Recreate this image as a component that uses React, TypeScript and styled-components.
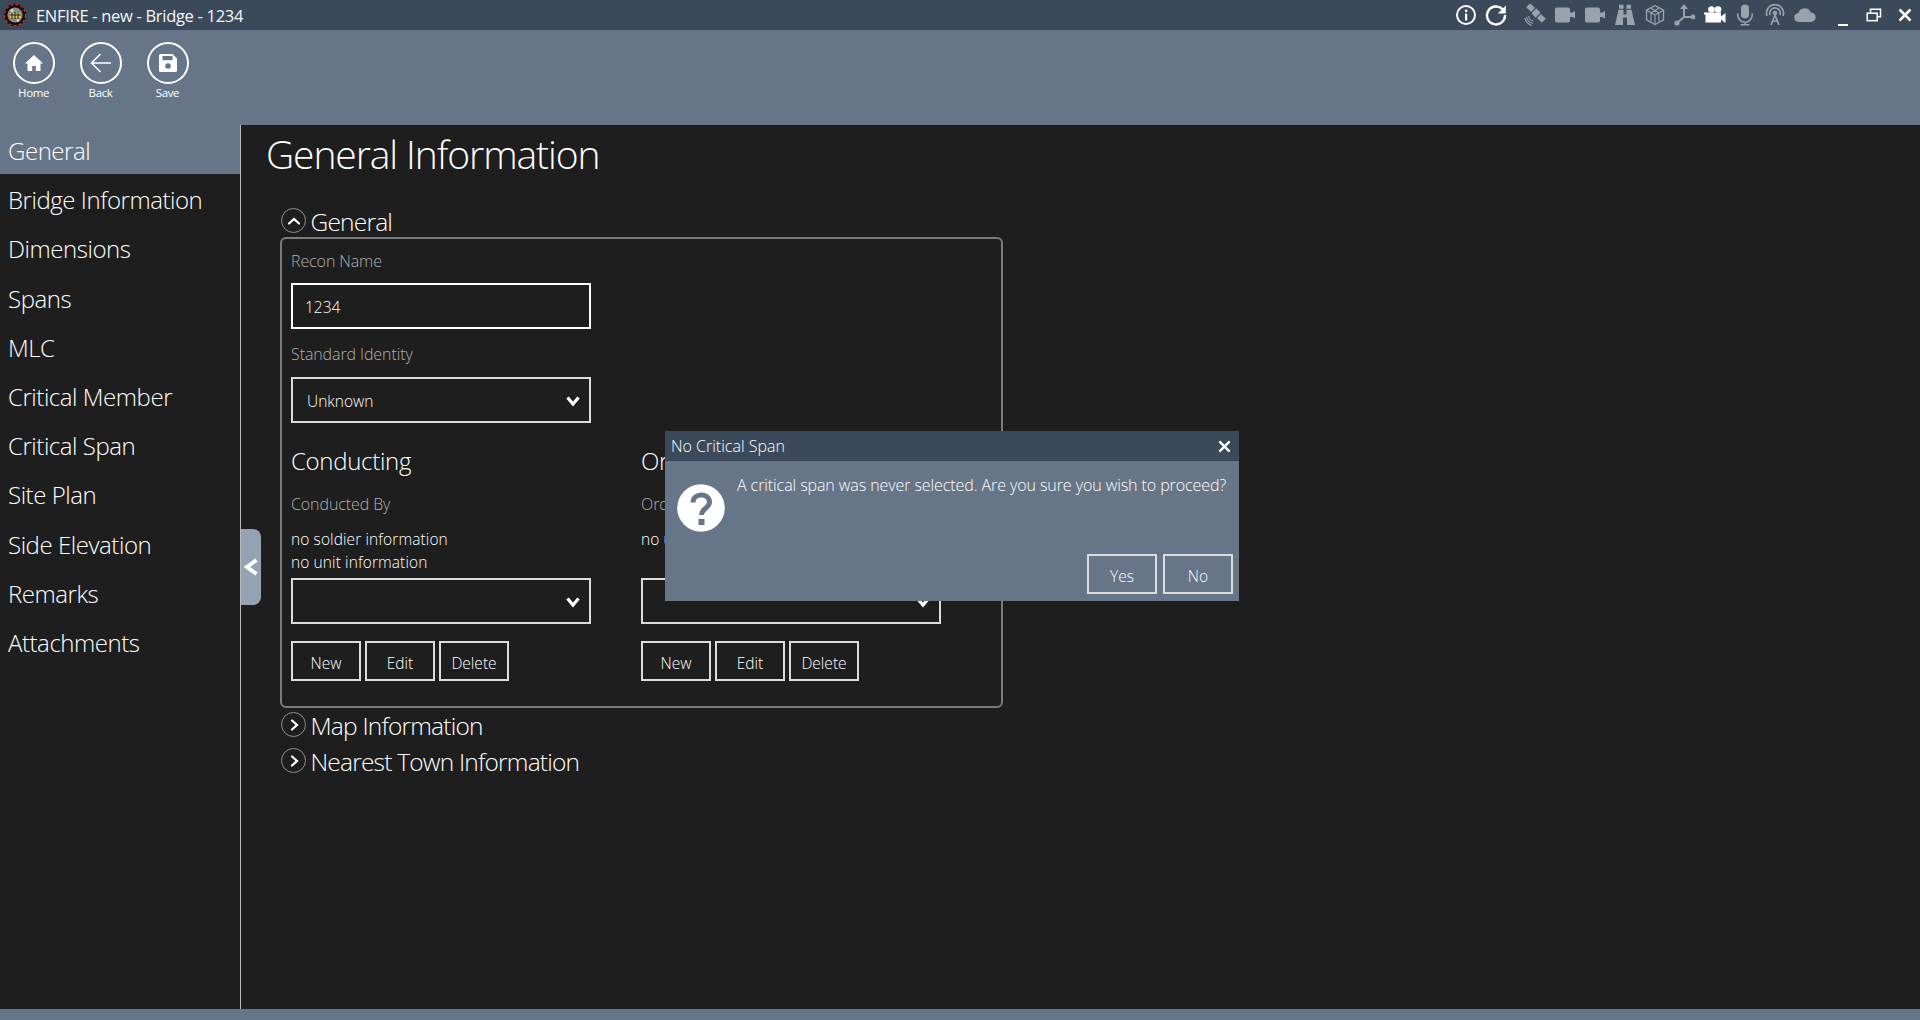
import React from "react";
import styled, { createGlobalStyle } from "styled-components";

const Global = createGlobalStyle`
  html, body { margin: 0; padding: 0; background: #1e1e1e; overflow: hidden; }
  * { box-sizing: border-box; }
`;

const FONT = `"Open Sans", "Noto Sans", "Liberation Sans", sans-serif`;
const TITLE = "#3a4a5b";
const STEEL = "#667587";
const DIM = "#98a3ae";

const Shell = styled.div`
  position: relative;
  width: 1920px;
  height: 1020px;
  display: flex;
  flex-direction: column;
  overflow: hidden;
  background: #1e1e1e;
  color: #fff;
  font-family: ${FONT};
`;

const TitleBar = styled.header`
  flex: 0 0 30px;
  display: flex;
  align-items: center;
  background: ${TITLE};
  padding-left: 3px;
`;
const AppTitle = styled.span`
  flex: 1;
  margin-left: 9px;
  font-size: 16.5px;
  letter-spacing: -0.3px;
  color: #f4f6f8;
  white-space: nowrap;
`;
const IconGroup = styled.div<{ $gap: number }>`
  display: flex;
  margin-left: ${(p) => p.$gap}px;
`;
const IconSlot = styled.div<{ $w?: number; $dim?: boolean }>`
  width: ${(p) => p.$w ?? 30}px;
  height: 30px;
  display: flex;
  align-items: center;
  justify-content: center;
  color: ${(p) => (p.$dim ? DIM : "#fff")};
`;

const Toolbar = styled.nav`
  flex: 0 0 95px;
  display: flex;
  background: ${STEEL};
`;
const ToolButton = styled.div`
  width: 67px;
  display: flex;
  flex-direction: column;
  align-items: center;
  padding-top: 12px;
`;
const ToolCircle = styled.div`
  width: 42px;
  height: 42px;
  border: 2px solid #fff;
  border-radius: 50%;
  display: flex;
  align-items: center;
  justify-content: center;
`;
const ToolLabel = styled.span`
  margin-top: 1px;
  font-size: 11.5px;
  line-height: 16px;
  letter-spacing: -0.4px;
`;

const Body = styled.div`
  flex: 1;
  display: flex;
  min-height: 0;
`;
const Sidebar = styled.aside`
  flex: 0 0 241px;
  border-right: 1px solid #b9b9b9;
`;
const SideItem = styled.div<{ $active?: boolean }>`
  height: 49.2px;
  padding: 2px 0 0 8px;
  display: flex;
  align-items: center;
  font-size: 24px;
  font-weight: 300;
  letter-spacing: -0.45px;
  background: ${(p) => (p.$active ? STEEL : "transparent")};
  white-space: nowrap;
`;

const Main = styled.main`
  position: relative;
  flex: 1;
  padding: 2px 0 0 39px;
`;
const PageTitle = styled.h1`
  margin: 0 0 27px -14px;
  font-size: 39px;
  line-height: 54px;
  font-weight: 300;
  letter-spacing: -1.1px;
`;
const SectionHeader = styled.div<{ $top?: number }>`
  height: 25px;
  margin-top: ${(p) => p.$top ?? 0}px;
  margin-bottom: 5px;
  display: flex;
  align-items: center;
  gap: 4.5px;
`;
const SectionRound = styled.div`
  width: 25px;
  height: 25px;
  border: 1.5px solid #8e8e8e;
  border-radius: 50%;
  margin-left: 1px;
  display: flex;
  align-items: center;
  justify-content: center;
`;
const SectionTitle = styled.span`
  font-size: 24.5px;
  line-height: 30px;
  font-weight: 300;
  letter-spacing: -0.8px;
  padding-top: 3px;
`;
const Panel = styled.section`
  width: 723px;
  height: 471px;
  margin-top: -1px;
  border: 2px solid #7c7c7c;
  border-radius: 6px;
  padding: 11px 0 0 9px;
  margin-bottom: 4px;
`;
const Field = styled.div`
  width: 300px;
`;
const Label = styled.div<{ $top?: number }>`
  margin-top: ${(p) => p.$top ?? 0}px;
  font-size: 16px;
  line-height: 22px;
  letter-spacing: -0.1px;
  font-weight: 300;
  color: #b0b0b0;
  white-space: nowrap;
`;
const TextInput = styled.div`
  width: 300px;
  height: 46px;
  margin-top: 11px;
  border: 2px solid #fff;
  padding: 2px 0 0 12px;
  display: flex;
  align-items: center;
  font-size: 15.5px;
  font-weight: 300;
`;
const Select = styled.div<{ $top: number }>`
  width: 300px;
  height: 46px;
  margin-top: ${(p) => p.$top}px;
  border: 2px solid #dcdcdc;
  padding: 2px 9px 0 14px;
  display: flex;
  align-items: center;
  justify-content: space-between;
  font-size: 15.5px;
  font-weight: 300;
`;
const Columns = styled.div`
  display: flex;
  gap: 50px;
`;
const SubHeading = styled.h2`
  margin: 22px 0 0;
  font-size: 24px;
  line-height: 32px;
  font-weight: 300;
  letter-spacing: -0.3px;
`;
const InfoLines = styled.div`
  margin-top: 13px;
  height: 46px;
  font-size: 15.5px;
  line-height: 23px;
  letter-spacing: 0.1px;
  font-weight: 300;
  white-space: nowrap;
`;
const Buttons = styled.div`
  display: flex;
  gap: 4px;
  margin-top: 17px;
`;
const OutlineButton = styled.div`
  width: 70px;
  height: 40px;
  border: 2px solid #dcdcdc;
  display: flex;
  align-items: center;
  justify-content: center;
  padding-top: 3px;
  font-size: 15.5px;
  font-weight: 300;
`;
const CollapseTab = styled.div`
  position: absolute;
  left: 0;
  top: 404px;
  width: 20px;
  height: 76px;
  background: #94a3b4;
  border-radius: 0 8px 8px 0;
  display: flex;
  align-items: center;
  justify-content: center;
`;
const Footer = styled.footer`
  flex: 0 0 11px;
  background: ${STEEL};
`;

const Dialog = styled.div`
  position: absolute;
  left: 665px;
  top: 431px;
  width: 574px;
  height: 170px;
  background: ${STEEL};
  display: flex;
  flex-direction: column;
`;
const DialogBar = styled.div`
  flex: 0 0 30px;
  background: ${TITLE};
  display: flex;
  align-items: center;
  justify-content: space-between;
  padding: 0 8px 0 6px;
  font-size: 16px;
  font-weight: 300;
`;
const DialogBody = styled.div`
  flex: 1;
  display: flex;
  padding: 0 5px 0 12px;
  position: relative;
`;
const DialogIcon = styled.div`
  flex: 0 0 48px;
  margin-top: 23px;
`;
const DialogMessage = styled.div`
  flex: 1;
  margin: 13px 0 0 12px;
  font-size: 16px;
  line-height: 22px;
  font-weight: 300;
  letter-spacing: -0.08px;
  white-space: nowrap;
`;
const DialogActions = styled.div`
  position: absolute;
  right: 6px;
  bottom: 7px;
  display: flex;
  gap: 6px;
`;

const Svg: React.FC<{ s?: number; children: React.ReactNode }> = ({ s = 22, children }) => (
  <svg width={s} height={s} viewBox="0 0 22 22" fill="currentColor">{children}</svg>
);

const Chevron = () => (
  <svg width="14" height="12" viewBox="0 0 14 12" fill="none" stroke="#fff" strokeWidth="3.2">
    <polyline points="1.5,2.5 7,9 12.5,2.5" />
  </svg>
);
const RoundChevron: React.FC<{ up?: boolean }> = ({ up }) => (
  <svg width="14" height="14" viewBox="0 0 14 14" fill="none" stroke="#fff" strokeWidth="2.2" strokeLinecap="round">
    {up ? <polyline points="2,9.5 7,5 12,9.5" /> : <polyline points="5,2.5 10,7 5,11.5" />}
  </svg>
);

const Logo = () => (
  <svg width="24" height="24" viewBox="0 0 24 24">
    <circle cx="12" cy="12" r="11.2" fill="#111" />
    <circle cx="12" cy="12" r="10.6" fill="none" stroke="#d8312a" strokeWidth="1.3" strokeDasharray="3 2" />
    <circle cx="12" cy="12" r="7.6" fill="#8e8a80" />
    <rect x="7" y="10" width="11" height="5" fill="#e2c430" />
    <path d="M7 12h11M9 10v6M12 9v7M15 10v6" stroke="#222" strokeWidth="1" />
    <circle cx="9" cy="7.5" r="1.6" fill="#d9d6cc" />
    <circle cx="15" cy="17.5" r="1.4" fill="#d9d6cc" />
  </svg>
);

const IconInfo = () => (
  <Svg>
    <circle cx="11" cy="11" r="9" fill="none" stroke="currentColor" strokeWidth="2" />
    <rect x="10" y="9.5" width="2.2" height="7" />
    <circle cx="11.1" cy="6.8" r="1.4" />
  </Svg>
);
const IconRefresh = () => (
  <Svg>
    <path d="M17.5 5.2A9 9 0 1 0 20 11" fill="none" stroke="currentColor" strokeWidth="2.4" />
    <path d="M20.8 1.5v8h-8z" />
  </Svg>
);
const IconSatellite = () => (
  <Svg>
    <g transform="rotate(45 12 9)">
      <rect x="9" y="5.5" width="6" height="7" rx="0.6" />
      <rect x="1" y="6.2" width="6.8" height="5.6" />
      <rect x="16.2" y="6.2" width="6.8" height="5.6" />
    </g>
    <path d="M4.5 12a6 6 0 0 0 5 5M2.5 13a8.5 8.5 0 0 0 6.5 6.5M.8 14a11 11 0 0 0 7 7.5" fill="none" stroke="currentColor" strokeWidth="1.1" />
  </Svg>
);
const IconPlug = () => (
  <Svg>
    <rect x="1" y="3.5" width="15" height="15" rx="2" />
    <path d="M16 8.5h2.5l2.5-1.5v7.5L18.5 13H16z" />
  </Svg>
);
const IconBinoculars = () => (
  <Svg>
    <path d="M5 .8h4.5v4H5zM12.5.8H17v4h-4.5zM4.5 5.8h5v4.7h3V5.8h5L21 21h-8v-7.5H9V21H1z" />
  </Svg>
);
const IconCube = () => (
  <Svg>
    <g fill="none" stroke="currentColor" strokeWidth="1.4" strokeLinejoin="round">
      <path d="M11 1.5l8.5 4.7v9.6L11 20.5l-8.5-4.7V6.2z" />
      <path d="M6.5 4L15 9v8.5M15.5 3.8L7 9v8.5M2.5 6.2L11 11l8.5-4.8M11 11v9.5" strokeWidth="1.1" />
    </g>
  </Svg>
);
const IconAxes = () => (
  <Svg>
    <path d="M10 3v10L3 19M10 13h9" fill="none" stroke="currentColor" strokeWidth="2" />
    <path d="M10 0l4 5H6z" />
    <circle cx="19" cy="13" r="2.4" />
    <circle cx="3" cy="19" r="2.6" />
  </Svg>
);
const IconVideo = () => (
  <Svg>
    <circle cx="7.5" cy="5.5" r="3.3" />
    <circle cx="14" cy="5.5" r="3.3" />
    <rect x="1.5" y="8.5" width="15.5" height="10" />
    <path d="M17 12.5l4.5-3.5v10l-4.5-3.5z" />
    <rect x="0" y="8.5" width="3" height="2" />
  </Svg>
);
const IconMic = () => (
  <Svg>
    <rect x="7" y="0.5" width="8" height="14" rx="4" />
    <path d="M3.8 9.5v1.5a7.2 7.2 0 0 0 14.4 0V9.5M11 18.2v2.3M6.5 20.8h9" fill="none" stroke="currentColor" strokeWidth="1.6" />
  </Svg>
);
const IconAntenna = () => (
  <Svg>
    <g fill="none" stroke="currentColor" strokeWidth="1.7">
      <path d="M3 12a8.5 8.5 0 1 1 16 0" />
      <path d="M6.2 11a5.2 5.2 0 1 1 9.6 0" />
      <path d="M11 11l-4 10M11 11l4 10M8.5 17h5" />
    </g>
    <circle cx="11" cy="9" r="2.3" />
  </Svg>
);
const IconCloud = () => (
  <Svg>
    <path d="M5 18a4.5 4.5 0 0 1-.6-9A6.5 6.5 0 0 1 16.7 8.4 4.8 4.8 0 0 1 17 18z" />
  </Svg>
);
const IconMin = () => (
  <svg width="12" height="22" viewBox="0 0 12 22"><rect x="1" y="20" width="10" height="2" fill="#fff" /></svg>
);
const IconRestore = () => (
  <svg width="16" height="14" viewBox="0 0 16 14" fill="none" stroke="#fff" strokeWidth="1.5">
    <rect x="1.2" y="5.2" width="10" height="7.5" />
    <path d="M4.5 5V1.2h10v7.5h-3.3" />
  </svg>
);
const IconClose: React.FC<{ s?: number }> = ({ s = 14 }) => (
  <svg width={s} height={s} viewBox="0 0 14 14" stroke="#fff" strokeWidth="2.5"><path d="M1.5 1.5l11 11M12.5 1.5l-11 11" /></svg>
);

const HomeGlyph = () => (
  <svg width="20" height="20" viewBox="0 0 20 20" fill="#fff">
    <path d="M10 2L.8 10.5h2.7V18h4.7v-5h3.6v5h4.7v-7.5h2.7z" />
  </svg>
);
const BackGlyph = () => (
  <svg width="24" height="22" viewBox="0 0 24 22" fill="none" stroke="#fff" strokeWidth="1.6">
    <path d="M22 11H3M11.5 2L2.5 11l9 9" />
  </svg>
);
const SaveGlyph = () => (
  <svg width="20" height="20" viewBox="0 0 20 20">
    <path d="M2.5 1h12L19 5.5V17.5a1.5 1.5 0 0 1-1.5 1.5h-15A1.5 1.5 0 0 1 1 17.5v-15A1.5 1.5 0 0 1 2.5 1z" fill="#fff" />
    <rect x="4.5" y="3" width="10" height="4.2" fill={STEEL} />
    <circle cx="10" cy="13" r="2.8" fill={STEEL} />
  </svg>
);

const QuestionIcon = () => (
  <svg width="48" height="48" viewBox="0 0 48 48">
    <circle cx="24" cy="24" r="23.8" fill="#fff" />
    <path d="M16 18.5c0-10 16.5-10 16.5-.5c0 6.5-8 6-8 13" fill="none" stroke={STEEL} strokeWidth="5" />
    <rect x="21.5" y="35" width="6" height="6" fill={STEEL} />
  </svg>
);

const NAV = ["General", "Bridge Information", "Dimensions", "Spans", "MLC", "Critical Member", "Critical Span", "Site Plan", "Side Elevation", "Remarks", "Attachments"];
const DIMMED = [
  <IconSatellite key="a" />, <IconPlug key="b" />, <IconPlug key="c" />, <IconBinoculars key="d" />,
  <IconCube key="e" />, <IconAxes key="f" />,
];

const Party: React.FC<{ heading: string; by: string; lines: string[] }> = ({ heading, by, lines }) => (
  <Field>
    <SubHeading>{heading}</SubHeading>
    <Label $top={16}>{by}</Label>
    <InfoLines>
      {lines.map((l) => (
        <div key={l}>{l}</div>
      ))}
    </InfoLines>
    <Select $top={4}>
      <span />
      <Chevron />
    </Select>
    <Buttons>
      <OutlineButton>New</OutlineButton>
      <OutlineButton>Edit</OutlineButton>
      <OutlineButton>Delete</OutlineButton>
    </Buttons>
  </Field>
);

export default function App() {
  return (
    <Shell>
      <Global />
      <TitleBar>
        <Logo />
        <AppTitle>ENFIRE - new - Bridge - 1234</AppTitle>
        <IconGroup $gap={0}>
          <IconSlot><IconInfo /></IconSlot>
          <IconSlot><IconRefresh /></IconSlot>
        </IconGroup>
        <IconGroup $gap={9}>
          {DIMMED.map((icon, i) => (
            <IconSlot key={i} $dim>{icon}</IconSlot>
          ))}
          <IconSlot><IconVideo /></IconSlot>
          <IconSlot $dim><IconMic /></IconSlot>
          <IconSlot $dim><IconAntenna /></IconSlot>
          <IconSlot $dim><IconCloud /></IconSlot>
        </IconGroup>
        <IconGroup $gap={8}>
          <IconSlot $w={30}><IconMin /></IconSlot>
          <IconSlot $w={31}><IconRestore /></IconSlot>
          <IconSlot $w={31}><IconClose /></IconSlot>
        </IconGroup>
      </TitleBar>
      <Toolbar>
        <ToolButton><ToolCircle><HomeGlyph /></ToolCircle><ToolLabel>Home</ToolLabel></ToolButton>
        <ToolButton><ToolCircle><BackGlyph /></ToolCircle><ToolLabel>Back</ToolLabel></ToolButton>
        <ToolButton><ToolCircle><SaveGlyph /></ToolCircle><ToolLabel>Save</ToolLabel></ToolButton>
      </Toolbar>
      <Body>
        <Sidebar>
          {NAV.map((n, i) => (
            <SideItem key={n} $active={i === 0}>{n}</SideItem>
          ))}
        </Sidebar>
        <Main>
          <PageTitle>General Information</PageTitle>
          <SectionHeader>
            <SectionRound><RoundChevron up /></SectionRound>
            <SectionTitle>General</SectionTitle>
          </SectionHeader>
          <Panel>
            <Label>Recon Name</Label>
            <TextInput>1234</TextInput>
            <Label $top={14}>Standard Identity</Label>
            <Select $top={12}>
              <span>Unknown</span>
              <Chevron />
            </Select>
            <Columns>
              <Party heading="Conducting" by="Conducted By" lines={["no soldier information", "no unit information"]} />
              <Party heading="Ordering" by="Ordered By" lines={["no unit information"]} />
            </Columns>
          </Panel>
          <SectionHeader>
            <SectionRound><RoundChevron /></SectionRound>
            <SectionTitle>Map Information</SectionTitle>
          </SectionHeader>
          <SectionHeader $top={11}>
            <SectionRound><RoundChevron /></SectionRound>
            <SectionTitle>Nearest Town Information</SectionTitle>
          </SectionHeader>
          <CollapseTab>
            <svg width="16" height="18" viewBox="0 0 16 18" fill="none" stroke="#fff" strokeWidth="4">
              <polyline points="13.5,2 4,9 13.5,16" />
            </svg>
          </CollapseTab>
        </Main>
      </Body>
      <Footer />
      <Dialog>
        <DialogBar>
          <span>No Critical Span</span>
          <IconClose s={13} />
        </DialogBar>
        <DialogBody>
          <DialogIcon><QuestionIcon /></DialogIcon>
          <DialogMessage>A critical span was never selected. Are you sure you wish to proceed?</DialogMessage>
          <DialogActions>
            <OutlineButton>Yes</OutlineButton>
            <OutlineButton>No</OutlineButton>
          </DialogActions>
        </DialogBody>
      </Dialog>
    </Shell>
  );
}
